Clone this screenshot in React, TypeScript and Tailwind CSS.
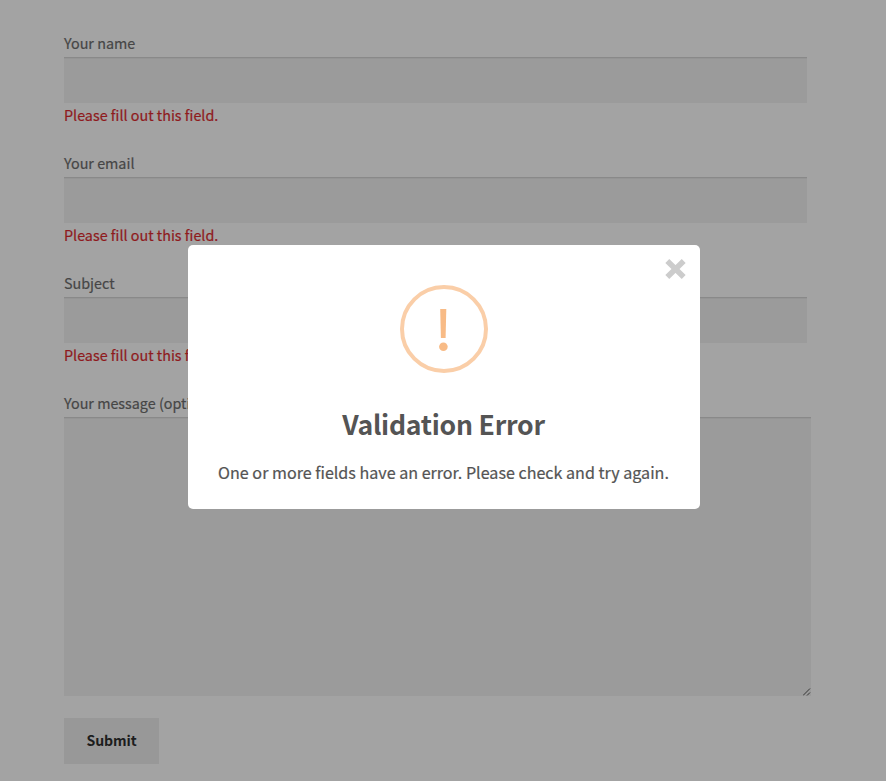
const ERROR_TEXT = 'Please fill out this field.';

function Field({ label }: { label: string }) {
  return (
    <div className="mb-6 h-24">
      <label className="block h-[23px] leading-[18px] text-[#464646] [-webkit-text-stroke:0.2px]">{label}</label>
      <div className="h-[46px] w-[743px] border-t border-[#898989] bg-[#9b9b9b] shadow-[inset_0_1px_0_#959595]" />
      <p className="h-[26px] leading-[23px] text-[#8f1a1d] [-webkit-text-stroke:0.2px]">{ERROR_TEXT}</p>
    </div>
  );
}

function WarningIcon() {
  return (
    <svg className="h-[88px] w-[88px]" viewBox="0 0 88 88" fill="none">
      <circle cx="44" cy="44" r="42" stroke="#facea8" strokeWidth="4" />
      <path d="M40.2 24h6.1l-.7 29h-4.7z" fill="#f8bb86" />
      <circle cx="43.4" cy="61.7" r="4.3" fill="#f8bb86" />
    </svg>
  );
}

export default function App() {
  return (
    <div className="relative h-[781px] w-[886px] overflow-hidden bg-[#a3a3a3] font-['Noto_Sans_CJK_SC',sans-serif] text-[14.35px]">
      <form className="pl-16 pt-[34px]">
        <Field label="Your name" />
        <Field label="Your email" />
        <Field label="Subject" />
        <label className="block h-[23px] leading-[18px] text-[#464646] [-webkit-text-stroke:0.2px]">
          Your message (optional)
        </label>
        <div className="flex h-[279px] w-[747px] items-end justify-end border-t border-[#898989] bg-[#9b9b9b] shadow-[inset_0_1px_0_#959595]">
          <svg className="h-2 w-2" viewBox="0 0 8 8" stroke="#353535" strokeWidth="1">
            <path d="M0 7.5l7-7M4 7.5l3-3" />
          </svg>
        </div>
        <button
          type="button"
          className="mt-[22px] block h-[46px] w-[95px] bg-[#989898] text-[14.1px] font-bold tracking-[-0.1px] text-[#1d1d1d]"
        >
          Submit
        </button>
      </form>

      <div
        role="dialog"
        className="absolute left-[188px] top-[245px] flex h-[264px] w-[512px] flex-col items-center rounded-[5px] bg-white pt-10"
      >
        <WarningIcon />
        <h2 className="mt-[30px] whitespace-nowrap pr-px text-[26.6px] font-bold leading-[42px] tracking-[-0.25px] text-[#545454]">
          Validation Error
        </h2>
        <p className="mt-[15px] whitespace-nowrap pr-px text-[16.1px] leading-[24px] text-[#545454] [-webkit-text-stroke:0.2px]">
          One or more fields have an error. Please check and try again.
        </p>
        <button type="button" aria-label="Close" className="absolute right-[14px] top-[14px]">
          <svg className="h-5 w-[21px]" viewBox="0 0 21 20" stroke="#ccc" strokeWidth="5.6">
            <path d="M2.3 2l16.4 16M18.7 2L2.3 18" />
          </svg>
        </button>
      </div>
    </div>
  );
}
